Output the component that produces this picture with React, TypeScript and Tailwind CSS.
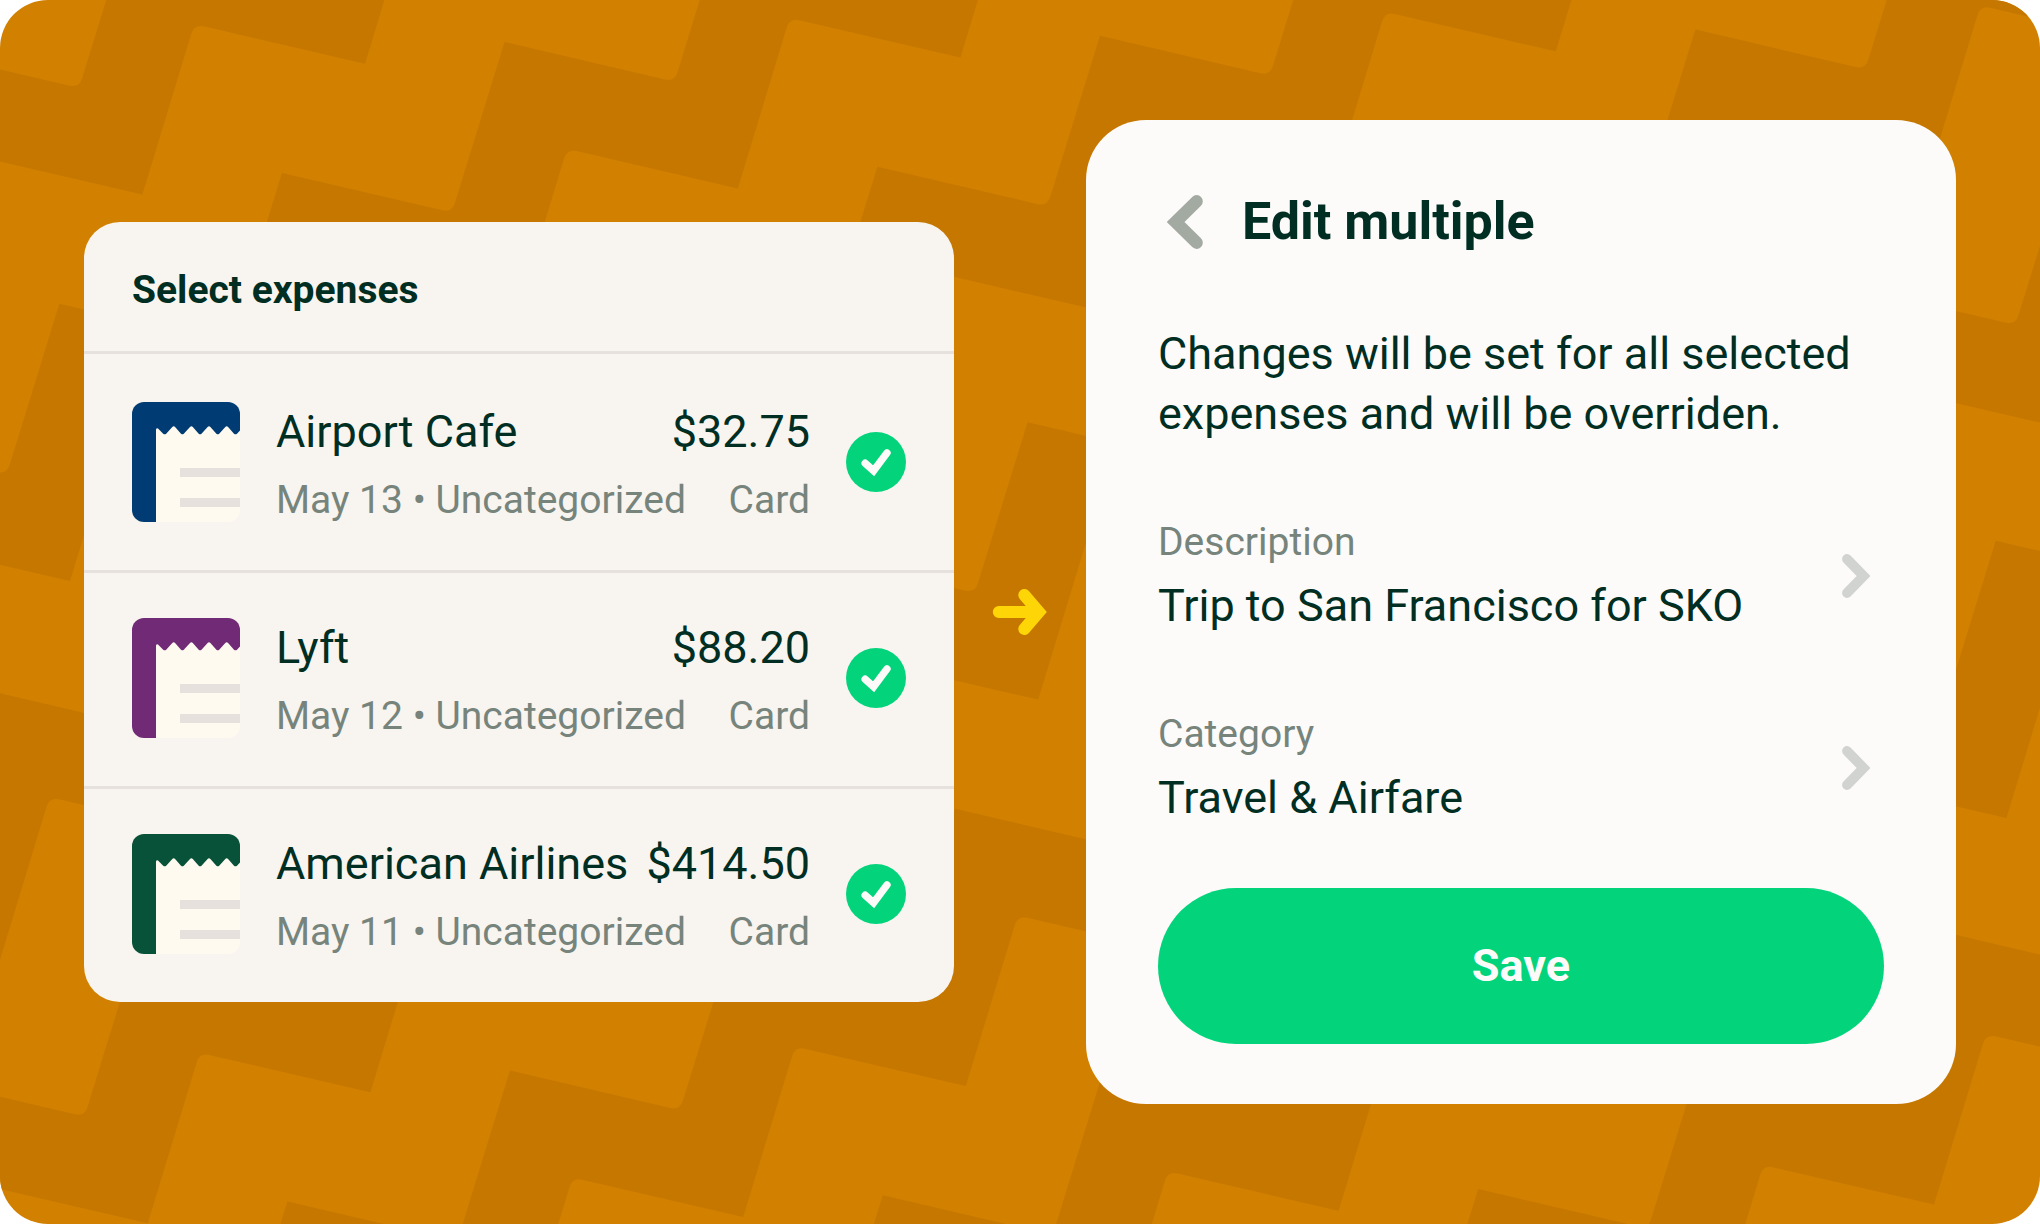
import { useState } from "react";

type Point = [number, number];

type Expense = {
  id: string;
  merchant: string;
  date: string;
  amount: string;
  color: string;
};

const expenses: Expense[] = [
  { id: "airport-cafe", merchant: "Airport Cafe", date: "May 13", amount: "$32.75", color: "#003c73" },
  { id: "lyft", merchant: "Lyft", date: "May 12", amount: "$88.20", color: "#712a76" },
  { id: "american-airlines", merchant: "American Airlines", date: "May 11", amount: "$414.50", color: "#085239" },
];

const fields = [
  { label: "Description", value: "Trip to San Francisco for SKO" },
  { label: "Category", value: "Travel & Airfare" },
];

/* One stair step along a band, and the distance from one band to the next. */
const STEP: Point = [222.6, -130.9];
const BAND: Point = [595.4, -6.2];

function roundedCorner(before: Point, corner: Point, after: Point, r: number) {
  const toward = (to: Point): Point => {
    const dx = to[0] - corner[0];
    const dy = to[1] - corner[1];
    const len = Math.hypot(dx, dy);
    return [corner[0] + (dx / len) * r, corner[1] + (dy / len) * r];
  };
  const a = toward(before);
  const b = toward(after);
  return `L${a[0]} ${a[1]}Q${corner[0]} ${corner[1]} ${b[0]} ${b[1]}`;
}

function bandPath(index: number) {
  const at = (base: Point, k: number): Point => [
    base[0] + k * STEP[0] + index * BAND[0],
    base[1] + k * STEP[1] + index * BAND[1],
  ];
  const upperSharp: Point = [282, 172.9];
  const upperRound: Point = [452, 212.6];
  const lowerRound: Point = [567, 148.8];
  const lowerSharp: Point = [737.8, 188.4];
  const parts: string[] = [];
  for (let k = -24; k <= 10; k++) {
    const sharp = at(upperSharp, k);
    parts.push(`${k === -24 ? "M" : "L"}${sharp[0]} ${sharp[1]}`);
    parts.push(roundedCorner(sharp, at(upperRound, k), at(upperSharp, k + 1), 10));
  }
  for (let k = 10; k >= -24; k--) {
    const sharp = at(lowerSharp, k);
    parts.push(`L${sharp[0]} ${sharp[1]}`);
    parts.push(roundedCorner(sharp, at(lowerRound, k), at(lowerSharp, k - 1), 10));
  }
  return parts.join("") + "Z";
}

const bands = [-2, -1, 0, 1, 2, 3, 4, 5, 6].map(bandPath);

function Backdrop() {
  return (
    <svg
      className="absolute inset-0 h-full w-full"
      viewBox="0 0 2040 1224"
      preserveAspectRatio="xMidYMid slice"
      aria-hidden="true"
    >
      {bands.map((d, i) => (
        <path key={i} d={d} fill="#c67700" />
      ))}
    </svg>
  );
}

function ReceiptIcon({ color }: { color: string }) {
  return (
    <svg className="h-30 w-27 shrink-0 rounded-xl" viewBox="0 0 108 120" aria-hidden="true">
      <path d="M0 0H108V40H25V120H0Z" fill={color} />
      <path
        d="M24 120V28Q24 25.500 26 26.500L31.200 31.700Q32.700 33 34.200 31.700L40.300 24.900Q41.700 23.500 43.100 24.900L49 31.700Q50.400 33 51.800 31.700L58 24.900Q59.400 23.500 60.800 24.900L66.700 31.700Q68.100 33 69.500 31.700L75.600 24.900Q77 23.500 78.400 24.900L84.400 31.700Q85.800 33 87.200 31.700L93.300 24.900Q94.700 23.500 96.100 24.900L102 31.700Q103.500 33 105 31.700L108 28.500V120Z"
        fill="#fffaf0"
      />
      <path d="M48 66h60v9H48zM48 96h60v9H48z" fill="#e6e1dc" />
    </svg>
  );
}

function ExpenseRow({ expense }: { expense: Expense }) {
  const [checked, setChecked] = useState(true);
  return (
    <li className="flex items-center gap-9 border-[#e6e1dc] px-12 py-12 not-first:border-t-3 not-first:pt-[45px]">
      <ReceiptIcon color={expense.color} />
      <div className="flex min-w-0 flex-1 flex-col gap-4">
        <div className="flex justify-between whitespace-nowrap text-[45px] leading-[60px]">
          <span>{expense.merchant}</span>
          <span>{expense.amount}</span>
        </div>
        <div className="flex justify-between whitespace-nowrap text-[39px] leading-[44px] text-[#76847c]">
          <span>{expense.date} • Uncategorized</span>
          <span>Card</span>
        </div>
      </div>
      <label className="grid shrink-0 cursor-pointer">
        <input
          type="checkbox"
          checked={checked}
          onChange={(e) => setChecked(e.target.checked)}
          aria-label={`Select ${expense.merchant}`}
          className="col-start-1 row-start-1 size-15 appearance-none rounded-full bg-[#e6e1dc] checked:bg-[#03d47c]"
        />
        <svg
          className="pointer-events-none col-start-1 row-start-1 size-15"
          viewBox="0 0 60 60"
          fill="none"
          aria-hidden="true"
        >
          <path d="M19.200 31.200L27.600 38.800L41 20.900" stroke="#fcfbf9" strokeWidth="7.400" strokeLinecap="round" />
        </svg>
      </label>
    </li>
  );
}

function FieldRow({ label, value }: { label: string; value: string }) {
  return (
    <button type="button" className="flex w-full cursor-pointer items-center justify-between text-left">
      <span className="flex flex-col gap-3">
        <span className="text-[39px] leading-[44px] text-[#76847c]">{label}</span>
        <span className="text-[45px] leading-[60px]">{value}</span>
      </span>
      <svg className="size-15 shrink-0" viewBox="0 0 60 60" fill="none" aria-hidden="true">
        <path d="M23 11L39.600 28L23 45" stroke="#d1d3d0" strokeWidth="9.800" strokeLinecap="round" />
      </svg>
    </button>
  );
}

export default function App() {
  return (
    <main className="relative grid min-h-screen grid-cols-[minmax(0,1fr)_auto_minmax(0,1fr)] items-center overflow-hidden rounded-[48px] bg-[#d18000] px-21 py-30 font-['Roboto',sans-serif] text-[#002e22]">
      <Backdrop />

      <section className="relative overflow-hidden rounded-[36px] bg-[#f8f4f0]">
        <h2 className="border-b-3 border-[#e6e1dc] px-12 pt-[46px] pb-[39px] text-[39px] leading-[44px] font-bold">
          Select expenses
        </h2>
        <ul>
          {expenses.map((expense) => (
            <ExpenseRow key={expense.id} expense={expense} />
          ))}
        </ul>
      </section>

      <div className="relative px-9">
        <svg className="size-15" viewBox="0 0 60 60" fill="none" stroke="#fed607" strokeWidth="12" aria-hidden="true">
          <path d="M8.800 30H46M34.300 13L48.900 30L34.300 47" strokeLinecap="round" />
        </svg>
      </div>

      <section className="relative rounded-[60px] bg-[#fcfbf9] px-18 pt-[66px] pb-15">
        <header className="flex items-center gap-6">
          <button type="button" aria-label="Back" className="cursor-pointer">
            <svg className="h-18 w-15" viewBox="0 0 60 72" fill="none" aria-hidden="true">
              <path d="M38.600 15.300L17.600 36L38.600 56.700" stroke="#a3aaa2" strokeWidth="12.400" strokeLinecap="round" />
            </svg>
          </button>
          <h1 className="text-[52px] leading-[72px] font-bold">Edit multiple</h1>
        </header>
        <p className="mt-[66px] text-[45px] leading-[60px]">
          Changes will be set for all selected expenses and will be overriden.
        </p>
        <div className="mt-19 mb-15 flex flex-col gap-19">
          {fields.map((field) => (
            <FieldRow key={field.label} label={field.label} value={field.value} />
          ))}
        </div>
        <button
          type="button"
          className="h-39 w-full cursor-pointer rounded-full bg-[#03d47c] text-[45px] leading-[60px] font-bold text-[#fcfbf9]"
        >
          Save
        </button>
      </section>
    </main>
  );
}
